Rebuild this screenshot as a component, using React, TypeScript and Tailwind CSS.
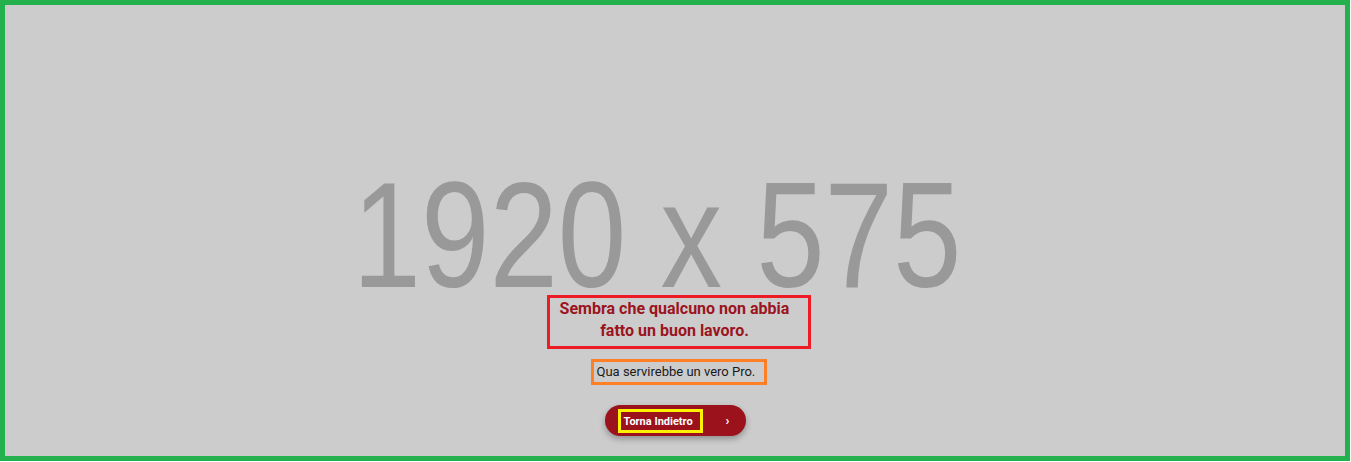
export default function App() {
    return (
        <div className="w-[1351px] h-[462px] bg-white">
            <div className="relative w-[1350px] h-[461px] border-[5px] border-[#22b14c] bg-[#cccccc] overflow-hidden" style={{ fontFamily: 'Roboto, "Liberation Sans", sans-serif' }}>
                {/* placeholder picture behind the content */}
                <div className="absolute top-[154px] left-[652px] -translate-x-1/2 scale-x-[0.815] whitespace-nowrap text-[151px] leading-none text-[#999999]" style={{ fontFamily: '"Liberation Sans", Arial, sans-serif' }}>
                    1920 x 575
                </div>

                <div className="relative flex flex-col items-center pt-[290px]">
                    <div className="ml-[8px] w-[264px] border-[3px] border-[#ed1c24] pb-[4px] pl-[4px] pr-[13px] text-center">
                        <h2 className="text-[16px] leading-[22px] font-bold text-[#9b1420]">
                            Sembra che qualcuno non abbia fatto un buon lavoro.
                        </h2>
                    </div>
                    <div className="ml-[7px] mt-[10px] w-[176px] border-[3px] border-[#ff7f27] pl-[3px]">
                        <p className="text-[13px] leading-[20px] text-[#1a1a1a] whitespace-nowrap">Qua servirebbe un vero Pro.</p>
                    </div>
                    <button className="mt-[20px] flex items-center h-[31px] w-[141px] rounded-full bg-[#9b111c] pl-[13px] pr-[16px] shadow-[0_3px_6px_rgba(0,0,0,0.3)]">
                        <span className="border-[3px] border-[#fff200] w-[85px] h-[24px] pl-[3px] pt-[2px] flex items-center text-[11px] leading-none font-bold text-white">
                            Torna Indietro
                        </span>
                        <span className="ml-auto text-[13px] font-bold text-white leading-none">›</span>
                    </button>
                </div>
            </div>
        </div>
    )
}
